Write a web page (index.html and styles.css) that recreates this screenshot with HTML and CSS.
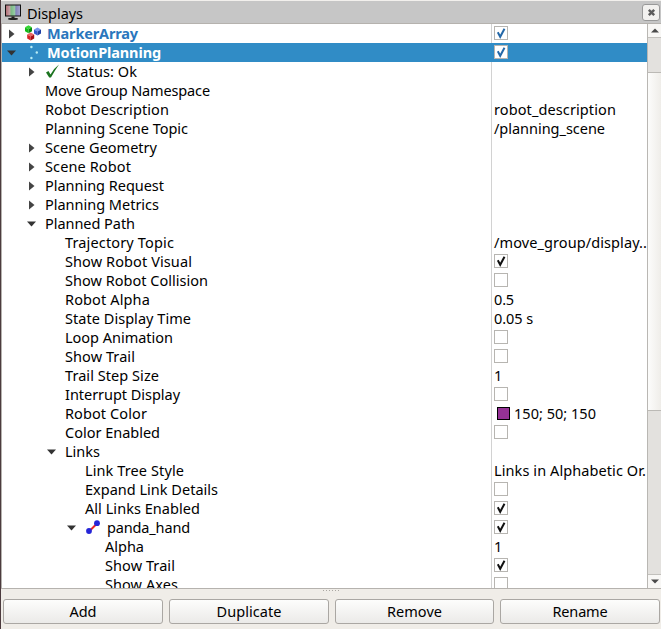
FILE: index.html
```html
<!DOCTYPE html>
<html lang="en">
<head>
<meta charset="utf-8">
<title>Displays</title>
<link rel="stylesheet" href="styles.css">
</head>
<body>
<div class="panel">
  <header class="titlebar">
    <svg class="monitor" width="18" height="18" viewBox="0 0 18 18">
      <defs><linearGradient id="scr"><stop offset="0" stop-color="#b06870"/><stop offset=".31" stop-color="#c8a8ac"/><stop offset=".35" stop-color="#78b880"/><stop offset=".64" stop-color="#98cca8"/><stop offset=".68" stop-color="#8080b8"/><stop offset="1" stop-color="#a8a8d0"/></linearGradient></defs>
      <rect x=".5" y="2" width="15" height="11" fill="url(#scr)" stroke="#111"/>
      <path d="M6.5 13.5h3v2h-3z" fill="#222"/><ellipse cx="8" cy="15.9" rx="5" ry="1.1" fill="#222"/>
    </svg>
    <span class="title" data-width="56">Displays</span>
    <button class="close" aria-label="Close"><svg width="9" height="9" viewBox="0 0 10 10"><path d="M2 2L8 8M8 2L2 8" stroke="#5c5c5c" stroke-width="2.7"/></svg></button>
  </header>
  <main class="view">
    <div class="tree" id="tree"></div>
    <div class="scrollbar">
      <div class="step"><svg width="8" height="5"><path d="M0 4.5L4 .5L8 4.5z" fill="#4a4a4a"/></svg></div>
      <div class="groove"><div class="thumb"></div></div>
      <div class="step down"><svg width="8" height="5"><path d="M0 .5L4 4.5L8 .5z" fill="#4a4a4a"/></svg></div>
    </div>
  </main>
  <div class="splitter"><i></i><i></i><i></i><i></i><i></i><i></i></div>
  <footer class="buttons">
    <button><span data-width="27">Add</span></button>
    <button><span data-width="65">Duplicate</span></button>
    <button><span data-width="55">Remove</span></button>
    <button><span data-width="55">Rename</span></button>
  </footer>
</div>
<script src="tree.js"></script>
</body>
</html>
```
FILE: styles.css
```css
* { box-sizing: border-box; }
body {
  margin: 0;
  background: #f0ede8;
  color: #000;
  font: 14.5px/19px "Noto Sans", "Open Sans", sans-serif;
}
button { font: inherit; color: inherit; padding: 0; }
svg { display: block; flex: none; }
.panel {
  width: 661px;
  height: 629px;
  display: flex;
  flex-direction: column;
  border-left: 1px solid #4c3b3e;
  overflow: hidden;
}
.titlebar {
  height: 23px;
  flex: none;
  display: flex;
  align-items: center;
  padding: 0 1px 0 4px;
  border-top: 1px solid #f2f0ed;
  background: #c6c6c6;
}
.title { margin: 2px 0 0 4px; white-space: pre; }
.close {
  width: 18px;
  height: 17px;
  margin-left: auto;
  display: grid;
  place-items: center;
  background: #f2f1ef;
  border: 1px solid #999;
  border-radius: 3px;
}
.view {
  height: 566px;
  flex: none;
  display: flex;
  border: solid #b5b2ae;
  border-width: 1px 0 1px 1px;
  background: #fff;
}
.tree { width: 645px; overflow: hidden; }
.row { display: grid; grid-template-columns: 489px 156px; height: 19px; }
.name { display: flex; align-items: center; }
.value {
  display: flex;
  align-items: center;
  border-left: 1px solid #d2d2d2;
  padding-left: 2px;
}
.name span, .value span { white-space: pre; }
.arrow { width: 14px; height: 14px; margin: 0 7px 0 -1px; }
.icon { width: 18px; height: 18px; margin: 0 5px 0 -1px; }
.display .name { color: #2a76bd; font-weight: 700; }
.selected { background: #308cc6; }
.selected .name { color: #fff; }
.selected .value { border-color: #308cc6; }
.check {
  width: 14px;
  height: 14px;
  margin-bottom: 1px;
  border: 1px solid #b7b5b1;
  background: #fff;
  color: #111;
}
.display .check { color: #2468a8; }
.swatch { width: 13px; height: 13px; margin: 0 4px 0 3px; border: 1px solid #000; background: #963296; }
.scrollbar { width: 14px; display: flex; flex-direction: column; border-left: 1px solid #b9b7b3; }
.step { height: 13px; flex: none; display: grid; place-items: center; background: #f8f7f5; }
.down { height: 14px; border-top: 1px solid #c2c0bc; }
.groove { flex: 1; padding-top: 34px; background: #e3e1de; border-top: 1px solid #c2c0bc; }
.thumb {
  height: 339px;
  border: solid #bbb9b5;
  border-width: 1px 0;
  background: linear-gradient(90deg, #fcfcfb, #efede9);
}
.splitter { height: 10px; flex: none; display: flex; justify-content: center; gap: 2px; padding-top: 1px; }
.splitter i { width: 1px; height: 1px; background: #aaa7a2; }
.buttons { display: grid; grid-template-columns: 160px 160px 159px 160px; column-gap: 6px; padding-left: 2px; }
.buttons button {
  height: 25px;
  border: 1px solid #aaa7a3;
  border-radius: 3px;
  background: linear-gradient(#fdfdfc, #ebeae8);
  white-space: pre;
}
```
FILE: tree.js
```js
const arrows = {
  closed: '<svg class="arrow" viewBox="0 0 14 14"><path d="M5 2.5L10.5 7L5 11.5z" fill="#444"/></svg>',
  open: '<svg class="arrow" viewBox="0 0 14 14"><path d="M3 4.5H12L7.5 9.5z" fill="#333"/></svg>',
  none: ''
};
const cube = (x, y, top, left, right) =>
  `<path d="M${x} ${y}l3.5 -2l3.5 2l-3.5 2z" fill="${top}"/><path d="M${x} ${y}l3.5 2v4l-3.5 -2z" fill="${left}"/><path d="M${x + 7} ${y}l-3.5 2v4l3.5 -2z" fill="${right}"/>`;
const icons = {
  markers: '<svg class="icon" viewBox="0 0 18 18">' + cube(1, 2.3, '#36d636', '#11bb15', '#078b0b') +
    cube(10, 4.5, '#7895ed', '#3659d0', '#203fa5') + cube(3.2, 9.5, '#ed6666', '#d82429', '#a80e15') + '</svg>',
  motion: '<svg class="icon" viewBox="0 0 18 18" fill="#b8ecf5"><circle cx="7.4" cy="3" r="1.2"/><circle cx="12.8" cy="8.5" r="1.2"/><circle cx="7.4" cy="14" r="1.2"/></svg>',
  ok: '<svg class="icon" viewBox="0 0 18 18"><path d="M2 9.5L4.5 8L6.5 11.5Q9.5 5.5 15 1.5Q10.5 8 7 14.5H5.2Z" fill="#1c7420"/></svg>',
  link: '<svg class="icon" viewBox="0 0 18 18"><path d="M5 12.5L13 4.5" stroke="#e82828" stroke-width="2"/><circle cx="5" cy="12" r="2.9" fill="#2525d8"/><circle cx="13" cy="4.2" r="2.9" fill="#2525d8"/></svg>'
};
const ON = true, OFF = false;

// level, arrow, label, label width, value, value width, icon
const rows = [
  [1, 'closed', 'MarkerArray', 91, ON, 0, 'markers'],
  [1, 'open', 'MotionPlanning', 114, ON, 0, 'motion'],
  [2, 'closed', 'Status: Ok', 70, null, 0, 'ok'],
  [3, 'none', 'Move Group Namespace', 165],
  [3, 'none', 'Robot Description', 124, 'robot_description', 122],
  [3, 'none', 'Planning Scene Topic', 143, '/planning_scene', 111],
  [2, 'closed', 'Scene Geometry', 112],
  [2, 'closed', 'Scene Robot', 86],
  [2, 'closed', 'Planning Request', 119],
  [2, 'closed', 'Planning Metrics', 114],
  [2, 'open', 'Planned Path', 90],
  [4, 'none', 'Trajectory Topic', 109, '/move_group/display..', 153],
  [4, 'none', 'Show Robot Visual', 127, ON],
  [4, 'none', 'Show Robot Collision', 143, OFF],
  [4, 'none', 'Robot Alpha', 85, '0.5', 20],
  [4, 'none', 'State Display Time', 126, '0.05 s', 39],
  [4, 'none', 'Loop Animation', 108, OFF],
  [4, 'none', 'Show Trail', 70, OFF],
  [4, 'none', 'Trail Step Size', 94, '1', 8],
  [4, 'none', 'Interrupt Display', 115, OFF],
  [4, 'none', 'Robot Color', 82, '150; 50; 150', 82],
  [4, 'none', 'Color Enabled', 95, OFF],
  [3, 'open', 'Links', 35],
  [5, 'none', 'Link Tree Style', 99, 'Links in Alphabetic Or.', 152],
  [5, 'none', 'Expand Link Details', 133, OFF],
  [5, 'none', 'All Links Enabled', 115, ON],
  [4, 'open', 'panda_hand', 83, ON, 0, 'link'],
  [6, 'none', 'Alpha', 39, '1', 8],
  [6, 'none', 'Show Trail', 70, ON],
  [6, 'none', 'Show Axes', 73, OFF]
];

const tick = '<svg width="12" height="12" viewBox="0 0 12 12"><path d="M2.8 5.3L5.2 9.8L9.5 1.8" fill="none" stroke="currentColor" stroke-width="2"/></svg>';

function valueCell(value, width, label) {
  if (value === undefined || value === null) return '';
  if (typeof value === 'boolean') return `<div class="check">${value ? tick : ''}</div>`;
  const swatch = label === 'Robot Color' ? '<div class="swatch"></div>' : '';
  return `${swatch}<span data-width="${width}">${value}</span>`;
}

// Text starts at the label column; arrows and icons sit in front of it.
const indent = { closed: { 1: 3, 2: 23 }, open: { 1: 3, 2: 23, 3: 43, 4: 63 }, none: { 3: 43, 4: 63, 5: 83, 6: 103 } };
document.getElementById('tree').innerHTML = rows.map(([level, arrow, label, width, value, valueWidth, icon]) => {
  const kind = (level === 1 ? ' display' : '') + (label === 'MotionPlanning' ? ' selected' : '');
  return `<div class="row${kind}"><div class="name" style="padding-left:${indent[arrow][level]}px">${arrows[arrow]}${icon ? icons[icon] : ''}` +
    `<span data-width="${width}">${label}</span></div><div class="value">${valueCell(value, valueWidth, label)}</div></div>`;
}).join('');

// Tracking gives each label its tabulated width.
document.querySelectorAll('[data-width]').forEach(el => {
  const gap = Number(el.dataset.width) - el.getBoundingClientRect().width;
  el.style.letterSpacing = gap / el.textContent.length + 'px';
});
```
